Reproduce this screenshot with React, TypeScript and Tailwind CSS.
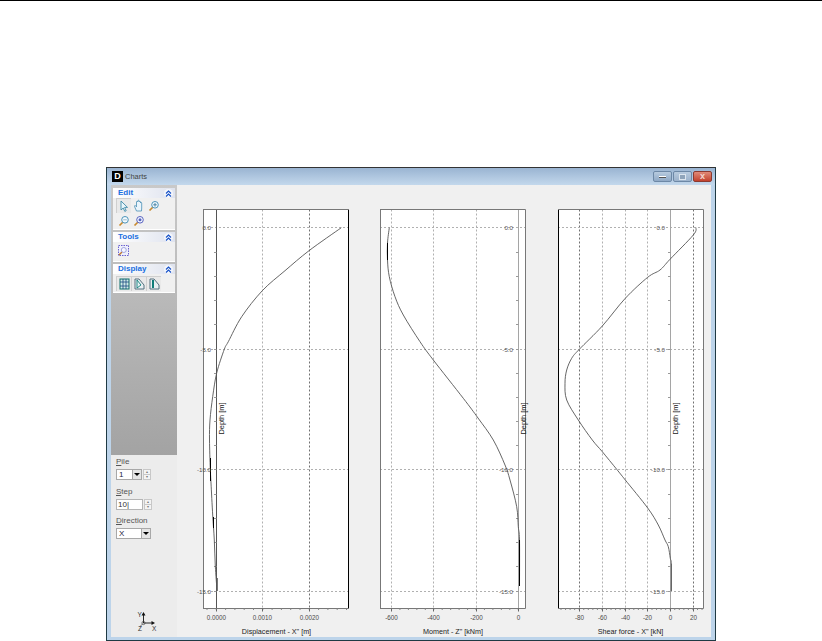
const font = "font-['Liberation_Sans',Arial,sans-serif]";

type Seg = { x: number; y1: number; y2: number; color?: string };
type ChartProps = {
  left: number;
  axisX: number;
  axisColor: string;
  labelEnd: number;
  grid: { x: number; label: string; dark?: boolean }[];
  minor: number[];
  curve: number[][];
  thick: Seg[];
  title: string;
  titleX: number;
  depthX: number;
  leftColor?: string;
  rightColor?: string;
  className: string;
};

const depthRows = [
  { y: 227.5, label: "0.0" },
  { y: 349.5, label: "-5.0" },
  { y: 469.5, label: "-10.0" },
  { y: 591.5, label: "-15.0" },
];
const depthTicks = [252, 276, 300, 324, 349, 373, 397, 421, 445, 469, 494, 518, 542, 566, 591];

// catmull-rom through the read-off points, so the curve has no corners
const smooth = (pts: number[][]) => {
  let d = `M${pts[0][0]} ${pts[0][1]}`;
  for (let i = 0; i < pts.length - 1; i++) {
    const a = pts[Math.max(i - 1, 0)];
    const b = pts[i];
    const c = pts[i + 1];
    const e = pts[Math.min(i + 2, pts.length - 1)];
    const c1x = b[0] + (c[0] - a[0]) / 6;
    const c1y = b[1] + (c[1] - a[1]) / 6;
    const c2x = c[0] - (e[0] - b[0]) / 6;
    const c2y = c[1] - (e[1] - b[1]) / 6;
    d += ` C${c1x} ${c1y} ${c2x} ${c2y} ${c[0]} ${c[1]}`;
  }
  return d;
};

const Chart = (p: ChartProps) => {
  const top = 209.5;
  const bottom = 608.5;
  const right = p.left + 145.5;
  return (
    <svg
      viewBox={`${p.left} 209 147 431`}
      className={`w-[147px] h-[431px] shrink-0 overflow-visible ${p.className}`}
    >
      <rect x={p.left + 0.5} y={top} width={145} height={bottom - top} fill="#ffffff" />
      {p.grid.map((g) =>
        g.x === p.axisX ? null : (
          <line key={g.x} x1={g.x} x2={g.x} y1={top} y2={bottom} stroke={g.dark ? "#707070" : "#b0b0b0"} strokeDasharray="2 2" />
        ),
      )}
      {depthRows.map((r) => (
        <line key={r.y} x1={p.left} x2={right} y1={r.y} y2={r.y} stroke="#b0b0b0" strokeDasharray="2 2" />
      ))}
      <line x1={p.axisX} x2={p.axisX} y1={top} y2={bottom} stroke={p.axisColor} />
      {depthTicks.map((t) => (
        <line key={t} x1={p.axisX - 2.5} x2={p.axisX} y1={t + 0.5} y2={t + 0.5} stroke="#999" />
      ))}
      <path d={smooth(p.curve)} fill="none" stroke="#555" strokeWidth={0.9} />
      {p.thick.map((s) => (
        <line key={s.y1} x1={s.x} x2={s.x} y1={s.y1} y2={s.y2} stroke={s.color ?? "#000"} strokeWidth={1} />
      ))}
      <line x1={p.left + 0.5} x2={p.left + 0.5} y1={top} y2={bottom} stroke={p.leftColor ?? "#777"} />
      <line x1={right} x2={right} y1={top} y2={bottom} stroke={p.rightColor ?? "#777"} />
      <line x1={p.left} x2={right} y1={top} y2={top} stroke="#777" />
      <line x1={p.left} x2={right} y1={bottom} y2={bottom} stroke="#777" />
      {p.minor.map((m) => (
        <line key={m} x1={m} x2={m} y1={bottom} y2={bottom + 1.5} stroke="#888" />
      ))}
      {p.grid.map((g) => (
        <g key={g.label}>
          <line x1={g.x} x2={g.x} y1={bottom} y2={bottom + 3} stroke="#666" />
          <text x={g.x} y={619.5} textAnchor="middle" fontSize={6.3} fill="#4a4a4a">
            {g.label}
          </text>
        </g>
      ))}
      {depthRows.map((r) => (
        <text key={r.label} x={p.labelEnd} y={r.y + 2} textAnchor="end" fontSize={6.2} fill="#555">
          {r.label}
        </text>
      ))}
      <text
        x={p.depthX}
        y={418.5}
        textAnchor="middle"
        fontSize={7.4}
        fill="#222"
        transform={`rotate(-90 ${p.depthX} 418.5)`}
      >
        Depth [m]
      </text>
      <text x={p.titleX} y={633.5} textAnchor="middle" fontSize={7.2} fill="#222">
        {p.title}
      </text>
    </svg>
  );
};

const range = (from: number, to: number, step: number) => {
  const out: number[] = [];
  for (let x = from; x <= to + 0.01; x += step) out.push(x);
  return out;
};

const Chevrons = () => (
  <svg width="9" height="9" viewBox="0 0 9 9" className="shrink-0">
    <circle cx="4.5" cy="4.5" r="4.5" fill="#f4f6fb" />
    <path d="M2 4.5 4.5 2 7 4.5M2 7.5 4.5 5 7 7.5" fill="none" stroke="#1450c8" strokeWidth="1.1" />
  </svg>
);

const Panel = ({ title, h, children }: { title: string; h: string; children: React.ReactNode }) => (
  <div className="flex flex-col">
    <div className="h-[10px] flex items-center justify-between pl-[5px] pr-[2px] bg-gradient-to-r from-white to-[#dfe3ee]">
      <span className="text-[8px] leading-none font-bold text-[#1a6fe0]">{title}</span>
      <Chevrons />
    </div>
    <div className={`${h} bg-[#f0f0f0] border-b border-white`}>{children}</div>
  </div>
);

const Arrow = () => (
  <svg width="12" height="13" viewBox="0 0 12 13">
    <path d="M3 1v9l2.2-2 1.6 3.4 1.4-.7-1.6-3.3H9.5z" fill="#e8f6fb" stroke="#3f8aa8" strokeWidth="0.9" />
  </svg>
);
const HandIcon = () => (
  <svg width="12" height="13" viewBox="0 0 12 13">
    <path d="M3.5 12 1.5 7.5c-.4-1 .8-1.4 1.3-.6l.7 1V3c0-1 1.2-1 1.3 0V2c0-1 1.3-1 1.4 0v1c.1-.9 1.3-.9 1.3 0v1c.1-.8 1.2-.8 1.2.1V9L8.5 12z" fill="#eaf4fb" stroke="#4a8fb5" strokeWidth="0.8" />
  </svg>
);
const Zoom = ({ sign }: { sign?: string }) => (
  <svg width="12" height="12" viewBox="0 0 12 12">
    <line x1="1.5" y1="10.5" x2="5" y2="7" stroke="#c88a30" strokeWidth="1.7" />
    <circle cx="7" cy="4.8" r="3.3" fill="#f3fbff" stroke={sign === "all" ? "#5a62c0" : "#4b93b8"} strokeWidth="1" />
    {sign === "plus" && <path d="M5.2 4.8h3.6M7 3v3.6" stroke="#2e6f96" strokeWidth="0.8" />}
    {sign === "minus" && <path d="M5.2 4.8h3.6" stroke="#8aa8ba" strokeWidth="0.8" />}
    {sign === "all" && <circle cx="7" cy="4.8" r="1.5" fill="#5a62c0" />}
  </svg>
);
const ZoomBox = () => (
  <svg width="11" height="11" viewBox="0 0 11 11">
    <rect x="0.5" y="0.5" width="10" height="10" fill="#eef0fb" stroke="#6a62d0" strokeDasharray="1.5 1" />
    <line x1="1" y1="10" x2="4" y2="7" stroke="#c07a30" strokeWidth="1.5" />
    <circle cx="5.8" cy="5" r="2.5" fill="#f5f7ff" stroke="#8f90d8" strokeWidth="0.8" />
  </svg>
);
const Pile3D = ({ kind }: { kind: number }) => (
  <svg width="11" height="12" viewBox="0 0 11 12">
    {kind === 0 ? (
      <>
        <rect x="1" y="1" width="9" height="10" fill="#cfe9e6" stroke="#0d6f6a" />
        <path d="M1 4h9M1 8h9M4 1v10M7 1v10" stroke="#1a4a80" strokeWidth="0.8" />
      </>
    ) : kind === 1 ? (
      <>
        <path d="M1 1h4l5 6v4H1z" fill="#e8eff2" stroke="#55707e" />
        <path d="M3 2v8l4-3z" fill="none" stroke="#0d7f78" strokeWidth="0.9" />
      </>
    ) : (
      <>
        <path d="M1 1h4l5 6v4H1z" fill="#e8eff2" stroke="#55707e" />
        <path d="M3 2h2v8H3z" fill="#0f7c78" />
      </>
    )}
  </svg>
);

const IconBtn = ({ active, children }: { active?: boolean; children: React.ReactNode }) => (
  <div className={`w-[15px] h-[15px] flex items-center justify-center ${active ? "bg-[#e9e9e9] border-l border-t border-[#cfcfcf]" : ""}`}>
    {children}
  </div>
);

const Spin = ({ h }: { h: string }) => (
  <div className={`w-[8px] ${h} flex flex-col border border-[#c8c8c8] bg-[#f4f4f4] shrink-0`}>
    <div className="flex-1 flex items-center justify-center text-[4px] leading-none text-[#777] border-b border-[#c8c8c8]">▴</div>
    <div className="flex-1 flex items-center justify-center text-[4px] leading-none text-[#777]">▾</div>
  </div>
);

const Combo = ({ value, w }: { value: string; w: string }) => (
  <div className={`${w} h-[11px] flex items-center justify-between bg-white border border-[#a8a8a8] shrink-0`}>
    <span className="pl-[2px] text-[8px] leading-none text-[#1c1c40]">{value}</span>
    <div className="w-[9px] h-full bg-[#e4e4e4] border-l border-[#a8a8a8] flex items-center justify-center">
      <div className="w-0 h-0 border-l-[3px] border-r-[3px] border-t-[3px] border-l-transparent border-r-transparent border-t-black" />
    </div>
  </div>
);

const Field = ({ first, rest, className, children }: { first: string; rest: string; className?: string; children: React.ReactNode }) => (
  <div className={`flex flex-col gap-[3px] ${className ?? ""}`}>
    <span className="text-[8px] leading-[9px] text-[#555]">
      <u>{first}</u>
      {rest}
    </span>
    <div className="flex items-center gap-[1px]">{children}</div>
  </div>
);

const WinBtn = ({ className, children }: { className: string; children: React.ReactNode }) => (
  <div className={`w-[19px] h-[11px] flex items-center justify-center rounded-[2px] border border-[#6d88a6] ${className}`}>
    {children}
  </div>
);

const App = () => {
  return (
    <div className={`w-[822px] h-[641px] bg-white overflow-hidden ${font}`}>
      <div className="h-[1px] bg-black" />
      <div className="ml-[106px] mt-[166px] w-[610px] h-[474px] flex flex-col border border-[#1f3a44] border-t-[#333] bg-[#bdd4ea]">
        <div className="h-[17px] shrink-0 flex items-center pl-[5px] pr-[3px] bg-gradient-to-b from-[#9ab4d2] to-[#c3d8ec]">
          <div className="w-[11px] h-[11px] bg-black text-white text-[9px] leading-[11px] font-bold text-center">D</div>
          <span className="ml-[2px] text-[7.5px] text-[#444]">Charts</span>
          <div className="ml-auto flex gap-[1px]">
            <WinBtn className="bg-gradient-to-b from-[#b8cbdf] to-[#8fa9c6]">
              <div className="w-[7px] h-[2px] bg-white border-b border-[#555]" />
            </WinBtn>
            <WinBtn className="bg-gradient-to-b from-[#b8cbdf] to-[#9db3cc]">
              <div className="w-[7px] h-[6px] border border-[#dde6ef] bg-[#8fa4ba]" />
            </WinBtn>
            <WinBtn className="border-[#8c3a30] bg-gradient-to-b from-[#e08a78] to-[#c2402c]">
              <span className="text-[9px] leading-none font-bold text-[#f2d6d0]">x</span>
            </WinBtn>
          </div>
        </div>
        <div className="flex-1 min-h-0 mx-[4px] mb-[3px] flex bg-[#f0f0f0]">
          <div className="w-[66px] shrink-0 flex flex-col bg-[#ececec]">
            <div className="h-[270px] shrink-0 flex flex-col gap-[2px] px-[2px] pt-[3px] bg-gradient-to-b from-[#c9c9c9] to-[#a3a3a3]">
              <Panel title="Edit" h="h-[32px]">
                <div className="flex flex-wrap pl-[3px]">
                  <IconBtn active><Arrow /></IconBtn>
                  <IconBtn><HandIcon /></IconBtn>
                  <IconBtn><Zoom sign="plus" /></IconBtn>
                  <IconBtn><Zoom sign="minus" /></IconBtn>
                  <IconBtn><Zoom sign="all" /></IconBtn>
                </div>
              </Panel>
              <Panel title="Tools" h="h-[20px]">
                <div className="flex pl-[3px] pt-[1px]">
                  <IconBtn><ZoomBox /></IconBtn>
                </div>
              </Panel>
              <Panel title="Display" h="h-[19px]">
                <div className="flex pl-[3px] pt-[2px]">
                  <IconBtn active><Pile3D kind={0} /></IconBtn>
                  <IconBtn active><Pile3D kind={1} /></IconBtn>
                  <IconBtn active><Pile3D kind={2} /></IconBtn>
                </div>
              </Panel>
            </div>
            <div className="flex flex-col pl-[5px] pt-[2px]">
              <Field first="P" rest="ile">
                <Combo value="1" w="w-[26px]" />
                <Spin h="h-[11px]" />
              </Field>
              <Field first="S" rest="tep" className="mt-[7px]">
                <div className="w-[27px] h-[11px] bg-white border border-[#b5b5b5] text-[8px] leading-[9px] pl-[1px] text-[#333] shrink-0">10|</div>
                <Spin h="h-[11px]" />
              </Field>
              <Field first="D" rest="irection" className="mt-[6px]">
                <Combo value="X" w="w-[35px]" />
              </Field>
            </div>
            <svg width="24" height="22" viewBox="0 0 24 22" className="mt-auto mb-[3px] ml-[24px]">
              <path d="M8.5 11V2M8.5 11H18" stroke="#111" strokeWidth="0.9" fill="none" />
              <path d="M8.5 0 10.5 3.5h-4zM20 11l-3.5-2v4z" fill="#111" />
              <circle cx="8.5" cy="11" r="1.6" fill="none" stroke="#444" strokeWidth="0.7" />
              <line x1="7.5" y1="12" x2="4.5" y2="15" stroke="#444" strokeWidth="0.7" />
              <text x="2.5" y="4.5" fontSize="6.5" fill="#333">Y</text>
              <text x="3" y="19" fontSize="6.5" fill="#333">Z</text>
              <text x="17" y="19" fontSize="6.5" fill="#333">X</text>
            </svg>
          </div>
          <div className="flex-1 flex items-start pl-[26px] pt-[24px]">
            <Chart
              left={203}
              className="mr-[30px]"
              axisX={216.5}
              axisColor="#555"
              labelEnd={211}
              rightColor="#000"
              grid={[
                { x: 216.5, label: "0.0000" },
                { x: 262.5, label: "0.0010" },
                { x: 309.5, label: "0.0020", dark: true },
              ]}
              minor={range(207, 348, 9.3)}
              curve={[
                [341.3, 227.7], [309, 250.7], [285, 270.7], [262.3, 290.7], [241.7, 316.7], [228.3, 341.7],
                [224.3, 349.3], [216.7, 373], [212.7, 396.7], [210, 420], [209.5, 440], [210.3, 469],
                [211, 483], [212.7, 515], [214.3, 540], [215.3, 566], [217, 590],
              ]}
              thick={[
                { x: 210.5, y1: 458, y2: 481 },
                { x: 213.5, y1: 517, y2: 528 },
                { x: 217.5, y1: 578, y2: 591, color: "#777" },
              ]}
              title={'Displacement - X" [m]'}
              titleX={276.5}
              depthX={223.5}
            />
            <Chart
              left={380}
              className="mr-[31px]"
              axisX={518.5}
              axisColor="#a5a5a5"
              labelEnd={513}
              grid={[
                { x: 391.5, label: "-600" },
                { x: 433.5, label: "-400" },
                { x: 476.5, label: "-200" },
                { x: 518.5, label: "0" },
              ]}
              minor={range(391.5, 526, 8.45)}
              curve={[
                [389.3, 227.7], [387.5, 243], [387.5, 260], [389.3, 276.7], [395, 296.7], [403.3, 315], [420, 341.7],
                [433.3, 360], [463.3, 398.3], [478, 418], [493.3, 440], [505, 465], [510, 480], [516.7, 506.7],
                [518.3, 526.7], [519.5, 540], [519.5, 586],
              ]}
              thick={[
                { x: 387.5, y1: 243, y2: 260 },
                { x: 519.5, y1: 540, y2: 586 },
              ]}
              title={'Moment - Z" [kNm]'}
              titleX={453}
              depthX={525.5}
            />
            <Chart
              left={558}
              className=""
              axisX={670.5}
              axisColor="#a5a5a5"
              labelEnd={665}
              leftColor="#000"
              grid={[
                { x: 579.5, label: "-80", dark: true },
                { x: 602.5, label: "-60" },
                { x: 625.5, label: "-40" },
                { x: 647.5, label: "-20" },
                { x: 670.5, label: "0" },
                { x: 693.5, label: "20", dark: true },
              ]}
              minor={range(561, 703, 4.55)}
              curve={[
                [696, 227.7], [693.3, 235], [670, 259.3], [660, 270], [647.7, 277.3], [625.3, 298.3], [602.3, 326],
                [579.3, 349.3], [571.7, 358.3], [566.7, 370], [565, 383.3], [566.7, 400], [578.3, 420], [592.3, 440],
                [602.3, 451.7], [616.7, 469.3], [625.3, 480], [647.7, 508], [658.3, 525], [665, 540], [668.3, 546.7],
                [670.3, 558.3], [671.3, 564], [671.3, 591],
              ]}
              thick={[{ x: 671.5, y1: 564, y2: 591, color: "#666" }]}
              title={'Shear force - X" [kN]'}
              titleX={630.5}
              depthX={677.5}
            />
          </div>
        </div>
      </div>
    </div>
  );
};

export default App;
